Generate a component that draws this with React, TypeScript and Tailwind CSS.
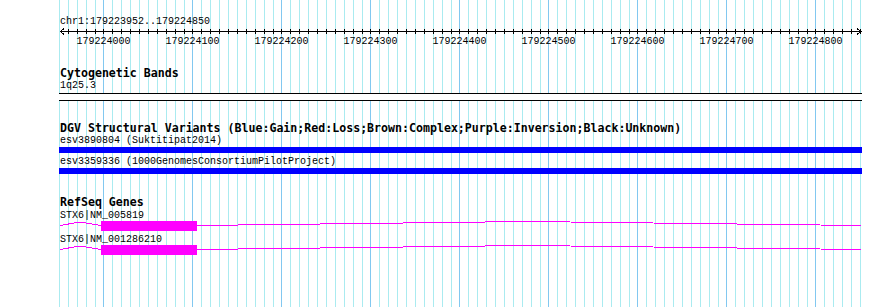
const MINOR = '#aaebf0'
const MAJOR = '#82c8f0'
const LEFT = 59

// grid columns, one per 10bp, starting at 179223950
const steps = Array.from({ length: 91 }, (_, i) => i - 5)
const colX = (k: number) => Math.floor(103.9 + 8.9 * k)
const majors = [0, 10, 20, 30, 40, 50, 60, 70, 80]

function Grid() {
  return (
    <svg className="absolute inset-0 pointer-events-none" width={890} height={307} shapeRendering="crispEdges">
      {steps.map((k) => (
        <rect key={k} x={colX(k)} y={0} width={1} height={307} fill={k % 10 === 0 ? MAJOR : MINOR} />
      ))}
    </svg>
  )
}

function Ruler() {
  return (
    <>
      <svg width={803} height={8} shapeRendering="crispEdges" className="block">
        <rect x={1} y={3} width={802} height={1} fill="#000" />
        {steps
          .filter((k) => k > -5)
          .map((k) => (
            <rect key={k} x={colX(k) - LEFT} y={1} width={1} height={5} fill="#000" />
          ))}
        <path d="M5 0.5 L1.5 3.5 L5 6.5" stroke="#000" fill="none" />
        <path d="M798 0.5 L801.5 3.5 L798 6.5" stroke="#000" fill="none" />
      </svg>
      <div className="relative h-[12px] leading-[12px]">
        {majors.map((k) => (
          <span
            key={k}
            className="absolute top-0 -translate-x-1/2 whitespace-nowrap"
            style={{ left: colX(k) + 0.5 - LEFT }}
          >
            {179224000 + k * 10}
          </span>
        ))}
      </div>
    </>
  )
}

function Title({ children, className = '' }: { children: string; className?: string }) {
  return (
    <div
      className={`pl-px h-[13px] leading-[13px] text-[11.6px] font-bold whitespace-nowrap font-['DejaVu_Sans_Mono',monospace] ${className}`}
    >
      {children}
    </div>
  )
}

function Label({ children, className = '' }: { children: string; className?: string }) {
  return <div className={`pl-px h-[12px] leading-[12px] whitespace-nowrap ${className}`}>{children}</div>
}

function Gene({ name }: { name: string }) {
  return (
    <div>
      <div className="pl-px h-[11px] leading-[11px] whitespace-nowrap">{name}</div>
      <svg width={803} height={13} shapeRendering="crispEdges" className="block">
        <polyline points="1,4.5 21,1 42,4.5" stroke="#ff00ff" fill="none" />
        <rect x={42} y={0} width={96} height={10} fill="#ff00ff" />
        <polyline points="138,4.5 469,0.5 802,4.5" stroke="#ff00ff" fill="none" />
      </svg>
    </div>
  )
}

export default function App() {
  return (
    <div className="relative w-[890px] h-[307px] bg-white overflow-hidden text-black text-[10px] font-['Liberation_Mono','DejaVu_Sans_Mono',monospace]">
      <Grid />
      <div className="relative ml-[59px] w-[803px] pt-[16px]">
        <Label>chr1:179223952..179224850</Label>
        <Ruler />

        {/* Cytogenetic Bands */}
        <Title className="mt-[19px]">Cytogenetic Bands</Title>
        <Label>1q25.3</Label>
        <div className="mt-px h-[8px] border-y border-black bg-white" />

        {/* DGV */}
        <Title className="mt-[21px]">DGV Structural Variants (Blue:Gain;Red:Loss;Brown:Complex;Purple:Inversion;Black:Unknown)</Title>
        <Label>esv3890804 (Suktitipat2014)</Label>
        <div className="h-[6px] bg-[#0000ff]" />
        <Label className="mt-[3px]">esv3359336 (1000GenomesConsortiumPilotProject)</Label>
        <div className="h-[6px] bg-[#0000ff]" />

        {/* RefSeq */}
        <Title className="mt-[22px]">RefSeq Genes</Title>
        <div className="mt-px">
          <Gene name="STX6|NM_005819" />
          <Gene name="STX6|NM_001286210" />
        </div>
      </div>
    </div>
  )
}
